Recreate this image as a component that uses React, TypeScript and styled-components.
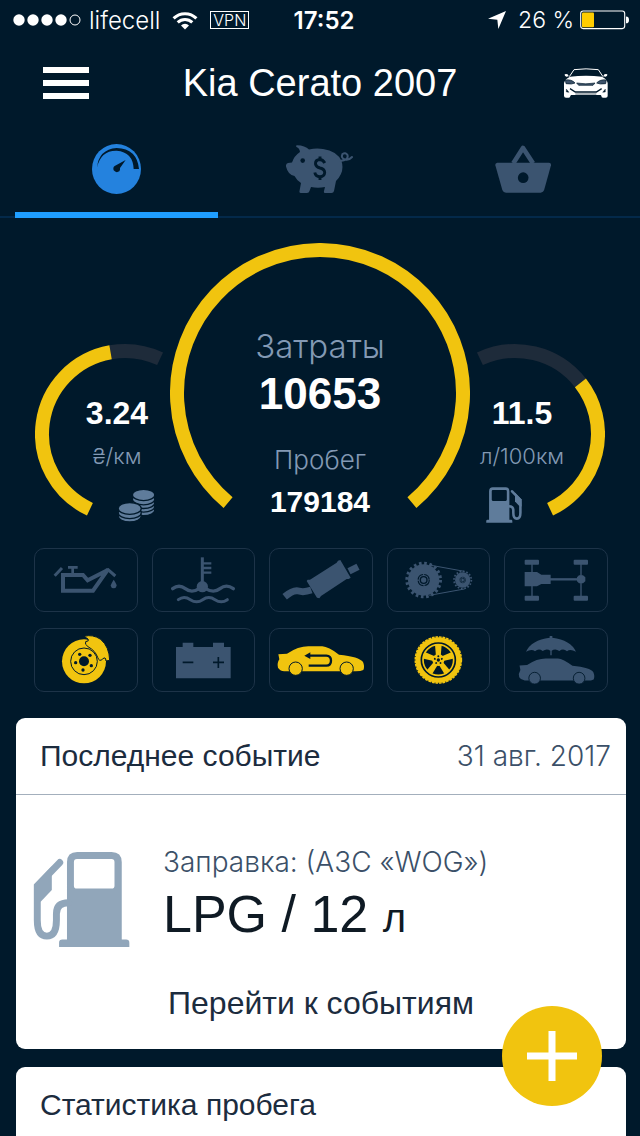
import React from "react";
import styled, { createGlobalStyle } from "styled-components";

const color = {
  bg: "#00192b",
  line: "#03294a",
  accent: "#1f9eff",
  dial: "#2482de",
  icon: "#3b5470",
  iconLight: "#5f7c9b",
  muted: "#8399b4",
  yellow: "#f1c40f",
  track: "#1e2b3a",
  cell: "#1d3348",
  ink: "#1c2c3e",
  slate: "#3b5068",
};

const sans = `"Liberation Sans", Arial, sans-serif`;
const light = `Inter, "Liberation Sans", sans-serif`;
const narrow = `"Liberation Sans Narrow", "Arial Narrow", "Liberation Sans", sans-serif`;

const GlobalStyle = createGlobalStyle`
  * { box-sizing: border-box; }
  body { margin: 0; background: ${color.bg}; font-family: ${sans}; }
  button { border: 0; padding: 0; margin: 0; background: none; font: inherit; color: inherit; cursor: pointer; }
  h1, h2, p { margin: 0; font-weight: 400; }
  svg { display: block; flex: none; }
`;

const Screen = styled.div`
  height: 100vh;
  display: flex;
  flex-direction: column;
  color: #fff;
  background: ${color.bg};
`;

const StatusBar = styled.div`
  display: grid;
  grid-template-columns: 1fr auto 1fr;
  align-items: center;
  height: 40px;
  flex: none;
  padding: 0 11px 0 13px;
  font-family: ${light};
  font-size: 24px;
`;

const StatusGroup = styled.div<{ $end?: boolean }>`
  display: flex;
  align-items: center;
  gap: ${(p) => (p.$end ? 6 : 12)}px;
  justify-content: ${(p) => (p.$end ? "flex-end" : "flex-start")};
`;

const Carrier = styled.div`
  display: flex;
  align-items: center;
  gap: 8px;
  font-weight: 300;
`;

const Clock = styled.time`
  padding-left: 6px;
  font-weight: 600;
`;

const VpnBadge = styled.span`
  border: 1px solid #fff;
  padding: 0 2px;
  font-size: 16px;
  line-height: 16px;
  font-weight: 300;
`;

const Percent = styled.span`
  padding-left: 6px;
  font-size: 23px;
  font-weight: 300;
`;

const Header = styled.header`
  display: grid;
  grid-template-columns: 46px 1fr 46px;
  align-items: center;
  height: 86px;
  flex: none;
  padding: 0 31px 0 43px;
`;

const Title = styled.h1`
  padding-right: 12px;
  font-size: 38px;
  line-height: 44px;
  text-align: center;
`;

const MenuButton = styled.button`
  display: flex;
  flex-direction: column;
  gap: 7px;
`;

const MenuBar = styled.span`
  height: 6px;
  width: 46px;
  background: #fff;
`;

const Tabs = styled.nav`
  display: grid;
  grid-template-columns: repeat(3, 1fr);
  flex: none;
  height: 92px;
  padding: 0 15px;
  background: linear-gradient(${color.line}, ${color.line}) bottom / 100% 2px no-repeat;
`;

const Tab = styled.button<{ $active?: boolean }>`
  display: flex;
  align-items: center;
  justify-content: center;
  border-bottom: 6px solid ${(p) => (p.$active ? color.accent : "transparent")};
`;

const Main = styled.main`
  flex: 1;
  min-height: 0;
  overflow-y: auto;
  scrollbar-width: none;
`;

const Gauges = styled.section`
  display: grid;
  grid-template-columns: 130px 300px 130px;
  justify-content: center;
  gap: 5px;
  padding-top: 25px;
  height: 330px;
`;

const Gauge = styled.div<{ $side?: boolean }>`
  display: grid;
  align-content: start;
  padding-top: ${(p) => (p.$side ? 100 : 0)}px;
  > * { grid-area: 1 / 1; }
`;

const Reading = styled.div<{ $pad: string }>`
  display: flex;
  flex-direction: column;
  align-items: center;
  padding: ${(p) => p.$pad};
  white-space: nowrap;
`;

const Value = styled.strong<{ $size: number }>`
  font-family: ${narrow};
  font-weight: 700;
  font-size: ${(p) => p.$size}px;
  line-height: ${(p) => p.$size}px;
`;

const Caption = styled.span<{ $size: number }>`
  font-family: ${light};
  font-weight: 300;
  color: ${color.muted};
  font-size: ${(p) => p.$size}px;
  line-height: ${(p) => p.$size + 8}px;
`;

const Pair = styled.div`
  display: flex;
  flex-direction: column;
  align-items: center;
  gap: 5px;
  & + & { padding-top: 27px; gap: 10px; }
`;

const Unit = styled.div`
  padding-top: 12px;
`;

const GaugeIcon = styled.div<{ $shift: "left" | "right" }>`
  display: flex;
  align-items: center;
  height: 52px;
  padding-top: 16px;
  padding-left: ${(p) => (p.$shift === "right" ? 38 : 0)}px;
  padding-right: ${(p) => (p.$shift === "left" ? 36 : 0)}px;
  color: ${color.iconLight};
`;

const Indicators = styled.section`
  display: grid;
  grid-template-columns: repeat(5, minmax(0, 1fr));
  gap: 16px 14px;
  padding: 0 32px 0 34px;
`;

const Indicator = styled.button<{ $on?: boolean }>`
  display: flex;
  align-items: center;
  justify-content: center;
  height: 64px;
  border: 1px solid ${color.cell};
  border-radius: 10px;
  color: ${(p) => (p.$on ? color.yellow : color.icon)};
`;

const Cards = styled.div`
  display: flex;
  flex-direction: column;
  gap: 18px;
  padding: 26px 14px 0 16px;
`;

const Card = styled.section`
  border-radius: 9px;
  background: #fff;
  color: ${color.ink};
`;

const CardHead = styled.div`
  display: flex;
  align-items: center;
  justify-content: space-between;
  height: 77px;
  padding: 0 15px 0 24px;
  border-bottom: 1px solid #a3afbc;
`;

const CardTitle = styled.h2`
  font-size: 30px;
  line-height: 34px;
`;

const CardDate = styled.time`
  font-family: ${light};
  font-weight: 300;
  font-size: 28px;
  color: ${color.slate};
`;

const Event = styled.div`
  display: flex;
  gap: 33px;
  padding: 50px 17px 0;
`;

const EventIcon = styled.div`
  padding-top: 6px;
  color: #91a6ba;
`;

const EventLabel = styled.p`
  font-family: ${light};
  font-weight: 300;
  font-size: 28px;
  line-height: 34px;
  color: ${color.slate};
`;

const EventValue = styled.p`
  font-size: 52px;
  line-height: 70px;
  color: #0f1a24;
  small { font-size: 40px; }
`;

const EventLink = styled.a`
  display: block;
  padding: 33px 0 29px;
  text-align: center;
  font-size: 32px;
  line-height: 34px;
  color: ${color.ink};
  text-decoration: none;
`;

const AddButton = styled.button`
  position: fixed;
  right: 38px;
  bottom: 30px;
  display: flex;
  align-items: center;
  justify-content: center;
  width: 100px;
  height: 100px;
  border-radius: 50%;
  background: ${color.yellow};
`;

/* ---------- status bar and header drawings ---------- */

const Signal = () => (
  <svg width="68" height="14" viewBox="0 0 68 14" fill="#fff">
    {[6, 20, 34, 48].map((x) => (
      <circle key={x} cx={x} cy="7" r="5.7" />
    ))}
    <circle cx="62" cy="7" r="5" fill="none" stroke="#fff" strokeWidth="1" />
  </svg>
);

const Wifi = () => (
  <svg width="26" height="19" viewBox="0 0 26 19" fill="none" stroke="#fff" strokeWidth="3">
    <path d="M1.6 7.4a16 16 0 0 1 22.8 0" />
    <path d="M5.7 11.4a10.4 10.4 0 0 1 14.6 0" />
    <path d="M13 18.6l-4-4.2a5.8 5.8 0 0 1 8 0z" fill="#fff" stroke="none" />
  </svg>
);

const Location = () => (
  <svg width="18" height="18" viewBox="0 0 54 54" fill="#fff">
    <path d="M0 23L54 0L31 54L28 26Z" />
  </svg>
);

const Battery = () => (
  <svg width="49" height="20" viewBox="0 0 49 20">
    <rect x=".7" y="1" width="44" height="17.6" rx="2.5" fill="none" stroke="#fff" strokeWidth="1.1" />
    <rect x="2" y="2.4" width="12" height="14.8" rx="1" fill="#ffcc00" />
    <path d="M46 6.5q3 0 3 3.4t-3 3.4z" fill="#fff" />
  </svg>
);

const CarFront = () => (
  <svg width="46" height="30" viewBox="729 203 138 90" fill="#fff">
    <path d="M748 229L762 208Q798 203 835 208L849 229" fill="none" stroke="#fff" strokeWidth="3" />
    <path d="M734 222q11-3 12 6l-7 1q-6-2-5-7zM862 222q-11-3-12 6l7 1q6-2 5-7z" />
    <path d="M750 229Q798 223 846 229Q860 235 863 248V287Q863 292 857 292H849Q844 292 844 286L842 284H753L751 287Q751 292 746 292H738Q732 292 732 286V248Q736 235 750 229Z" />
    <g fill={color.slate} stroke={color.bg} strokeWidth="2">
      <path d="M736 239Q754 236 765 248Q756 253 738 250Z" />
      <path d="M859 239Q841 236 830 248Q839 253 857 250Z" />
      <path d="M770 248Q797 253 825 248L819 255H776Z" />
    </g>
    <g fill="none" stroke={color.bg}>
      <path d="M750 265L766 275H829L845 265" strokeWidth="4" />
      <path d="M739 266v9l8 1z M856 266v9l-8 1z" fill={color.bg} strokeWidth="1" />
      <path d="M766 281H829" strokeWidth="2" />
    </g>
  </svg>
);

const Dial = () => (
  <svg width="49" height="50" viewBox="276 72 147 150">
    <ellipse cx="349.500" cy="147" rx="73.500" ry="75" fill={color.dial} />
    <path d="M291 143Q296 88 350 84Q411 86 417 147H401Q399 96 350 92Q302 91 291 143Z" fill={color.bg} />
    <path d="M377 120L344 138Q338 142 341 151Q348 160 358 154Q361 150 360 144Z" fill={color.bg} />
  </svg>
);

const Pig = () => (
  <svg width="68" height="50" viewBox="286 144 68 50" fill={color.icon}>
    <path d="M297 145.300Q305 145.500 309 149.500Q316 148 323 149Q337 151 341.500 161Q345 172 336 181L334 191Q333.500 193 331.500 193H325Q323.500 193 324 191L325 187Q318 188.500 311 187L309.500 191Q309 193 307 193H301Q299 193 299.500 191L301 183Q296.500 180 294.500 176Q288 175 286 166.500Q285.700 163.500 288 163L292 162.500Q294 156 300 152Q299.500 148 296.500 147Q295.500 145.500 297 145.300Z" />
    <path d="M340 161Q349 160 347.500 155Q345.500 152 342.500 154Q340.500 158 345 159.500Q349 160.500 352 157" fill="none" stroke={color.icon} strokeWidth="2" strokeLinecap="round" />
    <circle cx="302.700" cy="160.600" r="2.300" fill={color.bg} />
    <path d="M324.800 163Q323 159.500 319.500 159.500Q315.200 160 315.500 164Q316 167 320 168Q324.500 169 324.700 172.500Q324.500 176.500 320 176.700Q315.500 176.500 314.800 172.500M320 156.500V160M320 176V180" fill="none" stroke={color.bg} strokeWidth="2.900" />
  </svg>
);

const Basket = () => (
  <svg width="56" height="50" viewBox="527 72 168 150">
    <path d="M582 130L611 84L641 130" fill="none" stroke={color.icon} strokeWidth="14" strokeLinejoin="round" />
    <path d="M534 128H689Q696 129 695 136L675 208Q672 218 664 218H560Q552 218 549 210L528 136Q527 129 534 128Z" fill={color.icon} />
    <circle cx="611.500" cy="173" r="16" fill={color.bg} />
  </svg>
);

/* ---------- gauges ---------- */

const polar = (cx: number, cy: number, r: number, deg: number) => {
  const a = (deg * Math.PI) / 180;
  return `${(cx + r * Math.sin(a)).toFixed(2)} ${(cy - r * Math.cos(a)).toFixed(2)}`;
};

/* Arc from one bearing to another, clockwise, with 0 at the top. */
const Arc = ({ c, r, from, to, stroke }: { c: [number, number]; r: number; from: number; to: number; stroke: string }) => (
  <path
    d={`M${polar(c[0], c[1], r, from)}A${r} ${r} 0 ${to - from > 180 ? 1 : 0} 1 ${polar(c[0], c[1], r, to)}`}
    fill="none"
    stroke={stroke}
    strokeWidth="14"
  />
);

const Coins = () => (
  <svg width="37" height="33" viewBox="292 775 111 100" fill={color.iconLight} stroke={color.bg} strokeWidth="4">
    {[839, 828, 817, 806, 793].map((y) => (
      <ellipse key={y} cx="369" cy={y} rx="34" ry="17" />
    ))}
    {[857, 847, 834].map((y) => (
      <ellipse key={y} cx="327" cy={y} rx="35" ry="18" />
    ))}
  </svg>
);

const Pump = ({ size, flip }: { size: number; flip?: boolean }) => (
  <svg width={size} height={size} viewBox="98 452 294 290">
    <g transform={flip ? "translate(490 0) scale(-1 1)" : undefined}>
      <path
        fill="currentColor"
        fillRule="evenodd"
        d="M201 718V484Q201 453 232 453H336Q367 453 367 484V718H380Q390 718 390 728V741H177V728Q177 718 187 718ZM231 474Q222 474 222 483V555Q222 564 231 564H336Q345 564 345 555V483Q345 474 336 474Z"
      />
      <path d="M179 485L111 556V660Q111 708 140 708Q169 708 169 660V640Q169 607 206 607" fill="none" stroke="currentColor" strokeWidth="21" strokeLinecap="round" />
      <path d="M103 550L155 496V568L122 603L101 610Z" fill="currentColor" />
    </g>
  </svg>
);

/* ---------- service indicators, 312 x 192 units each ---------- */

const IndicatorArt = ({ origin, children }: { origin: string; children: React.ReactNode }) => (
  <svg width="104" height="64" viewBox={`${origin} 312 192`} fill="currentColor">
    {children}
  </svg>
);

const strokeOnly = { fill: "none", stroke: "currentColor" } as const;

const OilCan = () => (
  <IndicatorArt origin="42 24">
    <path d="M129 105H189L203 121L262 91L219 152H129Z" {...strokeOnly} strokeWidth="12" />
    <path d="M258 90L264 89L286 108M104 107L126 84" {...strokeOnly} strokeWidth="9" />
    <path d="M144 82H173M158 82V102" {...strokeOnly} strokeWidth="8" />
    <path d="M281 119Q290 132 290 137Q288 145 281 145Q274 145 272 137Q273 132 281 119Z" />
  </IndicatorArt>
);

const Coolant = () => (
  <IndicatorArt origin="396 24">
    <path d="M550 52V135" {...strokeOnly} strokeWidth="9" />
    <path d="M550 70H577M550 84H577M550 98H577" {...strokeOnly} strokeWidth="7" />
    <circle cx="550" cy="140" r="17" />
    <path d="M461 146Q480 131 499 146T540 146M560 146Q584 161 603 146T643 146" {...strokeOnly} strokeWidth="10" strokeLinecap="round" />
    <path d="M478 179Q495 166 514 179T551 179T588 179T625 179" {...strokeOnly} strokeWidth="9" strokeLinecap="round" />
  </IndicatorArt>
);

const Muffler = () => (
  <IndicatorArt origin="30 24">
    <path d="M237 62L244 60L275 113L269 117L263 117L186 168L181 175L174 173L143 123L146 119L153 119L233 68Z" />
    <path d="M77 170Q104 148 119 153T157 150" {...strokeOnly} strokeWidth="21" />
    <path d="M270 94L297 80" {...strokeOnly} strokeWidth="20" />
  </IndicatorArt>
);

const Gear = ({ cx, r, teeth }: { cx: number; r: number; teeth: number }) => {
  const step = (2 * Math.PI * r) / teeth;
  return (
    <g>
      <circle cx={cx} cy="120" r={r - 3} />
      <circle cx={cx} cy="120" r={r} {...strokeOnly} strokeWidth={r / 5} strokeDasharray={`${step / 2} ${step / 2}`} />
      <circle cx={cx} cy="120" r={r / 3} fill="none" stroke={color.bg} strokeWidth={r / 14} strokeDasharray={`${r / 2.2} ${r / 15}`} />
      <circle cx={cx} cy="120" r={r / 5} fill="none" stroke={color.bg} strokeWidth={r / 12} />
    </g>
  );
};

const TimingBelt = () => (
  <IndicatorArt origin="378 24">
    <path d="M505 75L610 94M505 166L610 147" {...strokeOnly} strokeWidth="3" />
    <Gear cx={488} r={50} teeth={20} />
    <Gear cx={605} r={26} teeth={16} />
  </IndicatorArt>
);

const Chassis = () => (
  <IndicatorArt origin="222 24">
    {[284, 431].map((x) => (
      <g key={x}>
        <rect x={x} y="59" width="43" height="15" rx="3" />
        <rect x={x} y="167" width="43" height="15" rx="3" />
        <path d={`M${x + 22} 70V170`} {...strokeOnly} strokeWidth="4" />
      </g>
    ))}
    <path d="M284 96H321L334 104H362V132H334L321 139H284Z" />
    <path d="M360 118H445" {...strokeOnly} strokeWidth="7" />
    <path d="M447 106H459L466 112V124L459 130H447L441 124V112Z" />
  </IndicatorArt>
);

const Brake = () => (
  <IndicatorArt origin="42 264">
    <circle cx="192" cy="364" r="66" />
    <path d="M192 289Q218 282 242 298Q268 320 269 361L258 363Q257 348 248 357Q238 367 233 352Q226 332 204 320Q193 313 197 305Q209 304 204 297Z" stroke={color.bg} strokeWidth="3" />
    <circle cx="192" cy="364" r="40" fill="currentColor" stroke={color.bg} strokeWidth="3" />
    <g fill={color.bg}>
      <circle cx="192" cy="364" r="15" />
      {[[179, 343], [210, 346], [214, 377], [189, 390], [167, 368]].map(([x, y]) => (
        <circle key={x} cx={x} cy={y} r="5" />
      ))}
    </g>
  </IndicatorArt>
);

const Accumulator = () => (
  <IndicatorArt origin="396 264">
    <path d="M471 321H491V308H523V321H582V308H615V321H635V415H471Z" />
    <path d="M491 367H523M582 367H615M598 351V384" stroke={color.bg} strokeWidth="5" />
  </IndicatorArt>
);

const CarSide = () => (
  <g>
    <path d="M58 343L84 341Q118 319 148 319H190Q208 320 240 344Q301 350 312 366Q318 380 313 390Q306 394 290 394H76Q62 392 57 383Q53 370 61 358Z" />
    {[110, 263].map((x) => (
      <circle key={x} cx={x} cy="386" r="20" stroke={color.bg} strokeWidth="3" />
    ))}
  </g>
);

const CarReturn = () => (
  <IndicatorArt origin="30 264">
    <CarSide />
    <path d="M149 377H202Q216 376 216 362T202 347H150" fill="none" stroke={color.bg} strokeWidth="7" />
    <path d="M136 347L154 337V357Z" fill={color.bg} />
  </IndicatorArt>
);

const Wheel = () => (
  <IndicatorArt origin="378 264">
    <circle cx="532" cy="360" r="61" {...strokeOnly} strokeWidth="15" />
    <circle cx="532" cy="360" r="69" {...strokeOnly} strokeWidth="5" strokeDasharray="8 2.840" />
    <circle cx="532" cy="360" r="46" {...strokeOnly} strokeWidth="5" />
    <circle cx="532" cy="360" r="18" />
    {[0, 72, 144, 216, 288].map((a) => (
      <g key={a} transform={`rotate(${a} 532 360)`}>
        <path d="M525 350L522 314H542L539 350Z" />
        <circle cx="532" cy="349" r="3" fill={color.bg} />
      </g>
    ))}
    <circle cx="532" cy="360" r="5" fill={color.bg} />
  </IndicatorArt>
);

const Insurance = () => (
  <IndicatorArt origin="222 264">
    <path d="M288 335Q304 300 359 293V288H367V293Q422 300 438 335Q420 326 411 334Q400 324 388 333Q376 324 365 332V346H361V332Q350 324 338 333Q326 324 315 334Q305 326 288 335Z" />
    <g transform="translate(218 73) scale(.872 .885)">
      <CarSide />
    </g>
  </IndicatorArt>
);

const indicators = [
  { name: "Масло", Art: OilCan },
  { name: "Охлаждение", Art: Coolant },
  { name: "Глушитель", Art: Muffler },
  { name: "Ремень ГРМ", Art: TimingBelt },
  { name: "Ходовая", Art: Chassis },
  { name: "Тормоза", Art: Brake, on: true },
  { name: "Аккумулятор", Art: Accumulator },
  { name: "Замена", Art: CarReturn, on: true },
  { name: "Шины", Art: Wheel, on: true },
  { name: "Страховка", Art: Insurance },
];

export default function App() {
  return (
    <Screen>
      <GlobalStyle />
      <StatusBar>
        <StatusGroup>
          <Carrier>
            <Signal />
            <span>lifecell</span>
          </Carrier>
          <Wifi />
          <VpnBadge>VPN</VpnBadge>
        </StatusGroup>
        <Clock>17:52</Clock>
        <StatusGroup $end>
          <Location />
          <Percent>26 %</Percent>
          <Battery />
        </StatusGroup>
      </StatusBar>

      <Header>
        <MenuButton aria-label="Меню">
          <MenuBar />
          <MenuBar />
          <MenuBar />
        </MenuButton>
        <Title>Kia Cerato 2007</Title>
        <button aria-label="Автомобиль">
          <CarFront />
        </button>
      </Header>

      <Tabs>
        <Tab $active aria-label="Показатели">
          <Dial />
        </Tab>
        <Tab aria-label="Расходы">
          <Pig />
        </Tab>
        <Tab aria-label="Покупки">
          <Basket />
        </Tab>
      </Tabs>

      <Main>
        <Gauges>
          <Gauge $side>
            <svg width="130" height="180" viewBox="0 0 130 180">
              <Arc c={[90, 91]} r={83} from={-10} to={25} stroke={color.track} />
              <Arc c={[90, 91]} r={83} from={-155} to={-10} stroke={color.yellow} />
            </svg>
            <Reading $pad="54px 0 0 34px">
              <Value $size={32}>3.24</Value>
              <Unit>
                <Caption $size={22}>₴/км</Caption>
              </Unit>
              <GaugeIcon $shift="right">
                <Coins />
              </GaugeIcon>
            </Reading>
          </Gauge>

          <Gauge>
            <svg width="300" height="280" viewBox="0 0 300 280">
              <Arc c={[150, 150]} r={143} from={-140} to={140} stroke={color.yellow} />
            </svg>
            <Reading $pad="83px 0 0">
              <Pair>
                <Caption $size={33}>Затраты</Caption>
                <Value $size={44}>10653</Value>
              </Pair>
              <Pair>
                <Caption $size={26}>Пробег</Caption>
                <Value $size={30}>179184</Value>
              </Pair>
            </Reading>
          </Gauge>

          <Gauge $side>
            <svg width="130" height="180" viewBox="0 0 130 180">
              <Arc c={[40, 91]} r={83} from={-25} to={52} stroke={color.track} />
              <Arc c={[40, 91]} r={83} from={52} to={155} stroke={color.yellow} />
            </svg>
            <Reading $pad="54px 36px 0 0">
              <Value $size={32}>11.5</Value>
              <Unit>
                <Caption $size={22}>л/100км</Caption>
              </Unit>
              <GaugeIcon $shift="left">
                <Pump size={36} flip />
              </GaugeIcon>
            </Reading>
          </Gauge>
        </Gauges>

        <Indicators>
          {indicators.map(({ name, Art, on }) => (
            <Indicator key={name} $on={on} aria-label={name}>
              <Art />
            </Indicator>
          ))}
        </Indicators>

        <Cards>
          <Card>
            <CardHead>
              <CardTitle>Последнее событие</CardTitle>
              <CardDate>31 авг. 2017</CardDate>
            </CardHead>
            <Event>
              <EventIcon>
                <Pump size={97} />
              </EventIcon>
              <div>
                <EventLabel>Заправка: (АЗС «WOG»)</EventLabel>
                <EventValue>
                  LPG / 12 <small>л</small>
                </EventValue>
              </div>
            </Event>
            <EventLink href="#events">Перейти к событиям</EventLink>
          </Card>
          <Card>
            <CardHead>
              <CardTitle>Статистика пробега</CardTitle>
            </CardHead>
          </Card>
        </Cards>
      </Main>

      <AddButton aria-label="Добавить">
        <svg width="50" height="50" viewBox="0 0 50 50">
          <path d="M25 0V50M0 25H50" stroke="#fff" strokeWidth="7" />
        </svg>
      </AddButton>
    </Screen>
  );
}
